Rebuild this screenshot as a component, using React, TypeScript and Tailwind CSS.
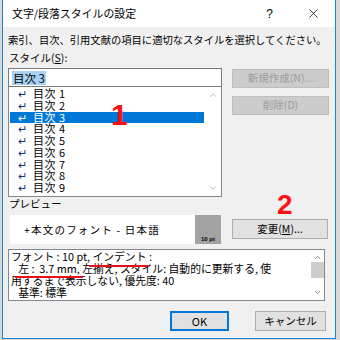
import { X, ChevronUp, ChevronDown } from "lucide-react";

// Word の「文字/段落スタイルの設定」ダイアログ

const items = ["1", "2", "3", "4", "5", "6", "7", "8", "9"];

export default function App() {
  return (
    <div className="w-[340px] h-[340px] bg-[#d8d8d8] pl-[2px] font-['Noto_Sans_CJK_JP',sans-serif] text-black">
      <div className="relative w-[334px] h-[339px] border-x border-b border-[#1883d7] bg-[#f0f0f0] flex flex-col">
        <TitleBar />
        <div className="pl-[5px] pr-[6px] flex flex-col">
          <div className="mt-[7px] h-[12px] leading-[12px] text-[10.3px] whitespace-nowrap">
            索引、目次、引用文献の項目に適切なスタイルを選択してください。
          </div>
          <div className="mt-[6px] h-[12px] leading-[12px] text-[10.5px] pl-[1px]">
            スタイル(<span className="underline">S</span>):
          </div>
          <div className="mt-[4px] flex gap-[10px]">
            <StyleList />
            <div className="flex flex-col gap-[8px] pt-[1px]">
              <DisabledButton>新規作成(N)...</DisabledButton>
              <DisabledButton>削除(D)</DisabledButton>
            </div>
          </div>
          <div className="mt-[1px] h-[12px] leading-[12px] text-[10.5px] pl-[1px]">プレビュー</div>
          <div className="mt-[5px] flex gap-[11px]">
            <Preview />
            <button className="mt-[4px] w-[96px] h-[20px] bg-[#e1e1e1] border border-[#adadad] text-[10.5px] leading-none">
              変更(<span className="underline">M</span>)...
            </button>
          </div>
          <Description />
          <div className="mt-[10px] flex justify-end gap-[26px] pr-[3px]">
            <button className="w-[59px] h-[20px] bg-[#e1e1e1] border-2 border-[#0078d7] text-[11px] leading-none">
              OK
            </button>
            <button className="w-[71px] h-[20px] bg-[#e1e1e1] border border-[#adadad] text-[10.5px] leading-none">
              キャンセル
            </button>
          </div>
        </div>
        <span className="absolute left-[108px] top-[100px] text-[30px] leading-none font-bold text-[#ff1010] font-['Liberation_Sans',sans-serif]">
          1
        </span>
        <span className="absolute left-[274px] top-[191px] text-[28px] leading-none font-bold text-[#ff1010] font-['Liberation_Sans',sans-serif]">
          2
        </span>
      </div>
    </div>
  );
}

function TitleBar() {
  return (
    <div className="h-[27px] bg-white flex items-center pl-[9px] pr-[14px] text-[10.9px]">
      <span className="flex-1 whitespace-nowrap">文字/段落スタイルの設定</span>
      <span className="mr-[33px] text-[12px] font-['Liberation_Sans',sans-serif]">?</span>
      <X size={15} strokeWidth={1.2} />
    </div>
  );
}

function StyleList() {
  return (
    <div className="w-[214px] flex flex-col">
      <div className="h-[19px] bg-white border border-[#7a7a7a] flex items-center pl-[3px]">
        <span className="bg-[#a9d1f2] text-[11.5px] leading-[14px] px-[1px]">目次 3</span>
      </div>
      <div className="h-[110px] bg-white border-x border-b border-[#828790] flex">
        <div className="flex-1 pt-[1px] pl-[1px]">
          {items.map((n) => {
            const sel = n === "3";
            return (
              <div
                key={n}
                className={
                  "h-[11.75px] flex items-center pl-[8px] text-[11px] leading-[11.75px] whitespace-nowrap tracking-[0.5px] " +
                  (sel ? "bg-[#0078d7] text-white" : "")
                }
              >
                <span className={"text-[11px] w-[15px] " + (sel ? "text-white" : "text-[#1a2f7a]")}>↵</span>
                目次 {n}
              </div>
            );
          })}
        </div>
        <div className="w-[17px] flex flex-col items-center justify-between py-[3px] text-[#a0a0a0]">
          <ChevronUp size={10} strokeWidth={1.8} />
          <ChevronDown size={10} strokeWidth={1.8} />
        </div>
      </div>
    </div>
  );
}

function DisabledButton({ children }: { children: React.ReactNode }) {
  return (
    <button className="w-[97px] h-[19px] bg-[#cccccc] border border-[#bfbfbf] text-[#9c9c9c] text-[10.5px] leading-none">
      {children}
    </button>
  );
}

function Preview() {
  return (
    <div className="ml-[2px] w-[211px] h-[29px] bg-white flex">
      <div className="flex-1 flex items-center pl-[14px] text-[10.5px] tracking-[1.2px] whitespace-pre">
        +本文のフォント - 日本語
      </div>
      <div className="w-[26px] bg-[#a3a3a3] flex items-end justify-center pb-[2px] text-[6px] leading-none font-bold font-['Liberation_Sans',sans-serif]">
        10 pt
      </div>
    </div>
  );
}

function Description() {
  return (
    <div className="mt-[5px] w-[317px] h-[52px] bg-white border border-[#828790] flex">
      <div className="flex-1 pl-[2px] text-[10.8px] leading-[12px] whitespace-pre">
        <div>
          フォント : 10 pt, <Mark y="-3px">インデント</Mark> :
        </div>
        <div>
          {"   "}
          <Mark y="-2px">左 :  3.7 mm,</Mark> 左揃え, スタイル: 自動的に更新する, 使
        </div>
        <div>用するまで表示しない, 優先度: 40</div>
        <div>{"   "}基準: 標準</div>
      </div>
      <div className="w-[13px] flex flex-col items-center justify-between py-[3px] text-[#606060]">
        <ChevronUp size={9} strokeWidth={2} />
        <div className="w-[13px] h-[16px] bg-[#cdcdcd]" />
        <div className="h-[10px]" />
        <ChevronDown size={9} strokeWidth={2} />
      </div>
    </div>
  );
}

function Mark({ children, y }: { children: React.ReactNode; y: string }) {
  return (
    <span className="relative">
      {children}
      <span className="absolute left-[-3px] right-[-3px] h-[2px] bg-[#e8101a]" style={{ bottom: y }} />
    </span>
  );
}
